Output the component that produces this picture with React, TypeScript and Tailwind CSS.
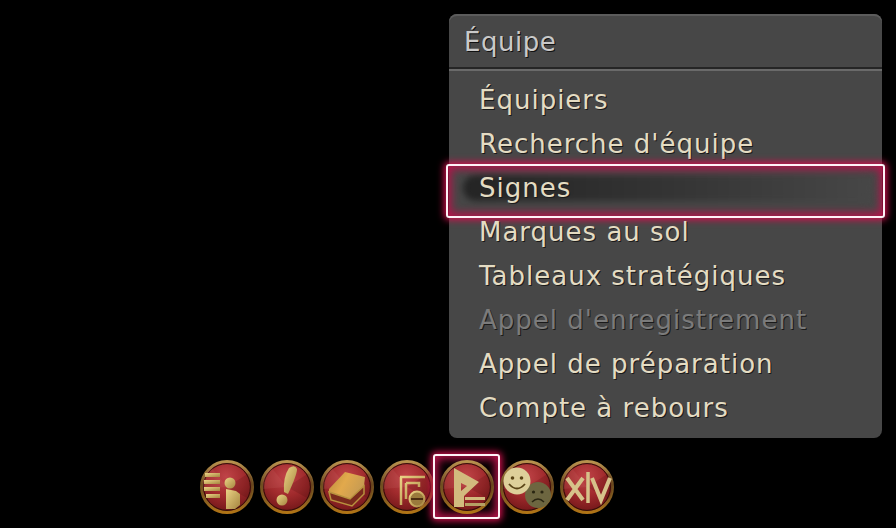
import React from "react";

const Defs = () => (
  <svg width="0" height="0" className="absolute">
    <defs>
      <radialGradient id="red" cx="48%" cy="30%" r="75%">
        <stop offset="0%" stopColor="#c04448" />
        <stop offset="50%" stopColor="#a02a2c" />
        <stop offset="85%" stopColor="#7a1a1c" />
        <stop offset="100%" stopColor="#3f0d0c" />
      </radialGradient>
      <linearGradient id="rim" x1="0" y1="0" x2="0" y2="1">
        <stop offset="0%" stopColor="#b8924e" />
        <stop offset="45%" stopColor="#6e4e20" />
        <stop offset="80%" stopColor="#8c6220" />
        <stop offset="100%" stopColor="#b07416" />
      </linearGradient>
      <linearGradient id="gold" x1="0" y1="0" x2="1" y2="1">
        <stop offset="0%" stopColor="#ecd486" />
        <stop offset="100%" stopColor="#a5853f" />
      </linearGradient>
      <linearGradient id="book" x1="0" y1="0" x2="1" y2="0.4">
        <stop offset="0%" stopColor="#b98a3c" />
        <stop offset="50%" stopColor="#e2a94c" />
        <stop offset="100%" stopColor="#c79b52" />
      </linearGradient>
    </defs>
  </svg>
);

const Coin = ({ children }: { children: React.ReactNode }) => (
  <svg width="56" height="56" viewBox="0 0 56 56" className="relative block shrink-0">
    <circle cx="28" cy="28" r="25.5" fill="url(#red)" stroke="url(#rim)" strokeWidth="3" />
    <circle cx="28" cy="28" r="23.4" fill="none" stroke="#2e0e06" strokeWidth="1" />
    <path d="M28 28 L12 8 A25 25 0 0 0 4 30 Z" fill="#d87c78" opacity="0.14" />
    <path d="M28 28 L50 14 A25 25 0 0 1 50 40 Z" fill="#400c0c" opacity="0.18" />
    {children}
  </svg>
);

const icons = [
  <g key="a" fill="url(#gold)">
    <rect x="6" y="14" width="15" height="4" />
    <rect x="5" y="21" width="16" height="4" />
    <rect x="5" y="28" width="16" height="4" />
    <rect x="7" y="35" width="14" height="4" />
    <circle cx="31" cy="24" r="5.5" />
    <path d="M27 30 V50 H36 L41 46 V35 L37 32 Z" />
  </g>,
  <g key="b" fill="url(#gold)">
    <path d="M30 9 Q36 5 38 10 Q38 16 29 35 L25 33 Q24 18 30 9 Z" />
    <circle cx="23" cy="41" r="5.5" />
  </g>,
  <g key="c">
    <path d="M10 30 L26 13 L46 18 L45 27 L31 40 L10 33 Z" fill="url(#book)" />
    <path d="M10 33 L12 41 L33 47 L45 35 V27 L31 40 Z" fill="#7a2a1c" stroke="#b8923e" strokeWidth="1.5" />
  </g>,
  <g key="d" fill="none" stroke="url(#gold)">
    <path d="M13 12 V40" strokeWidth="5.5" strokeLinecap="round" />
    <path d="M21 18 H46 M22 18 V46 M27 24 H40 V28 M27 24 V40" strokeWidth="2.5" />
    <circle cx="38" cy="40" r="7.5" fill="#9a7a3c" strokeWidth="2" />
    <path d="M32 40 H44" stroke="#4a2c10" strokeWidth="2" />
  </g>,
  <g key="e" fill="#d2bb7e">
    <path fillRule="evenodd" d="M15 9 L40 23 L25 37 V48 H15 Z M22 24 V32 L28 27 Z" />
    <rect x="26" y="38" width="20" height="3" />
    <rect x="26" y="44" width="20" height="3" fill="#b5a064" />
  </g>,
  <g key="f">
    <circle cx="39" cy="36" r="13" fill="#6d6640" />
    <circle cx="34.5" cy="33" r="1.6" fill="#2a2612" />
    <circle cx="43" cy="33" r="1.6" fill="#2a2612" />
    <path d="M33 43 Q39 37 45 43" fill="none" stroke="#2a2612" strokeWidth="1.5" />
    <circle cx="18" cy="22" r="13.5" fill="#ded09a" />
    <circle cx="13.5" cy="19" r="1.8" fill="#5a4416" />
    <circle cx="22.5" cy="19" r="1.8" fill="#5a4416" />
    <path d="M10 25 Q18 34 26 25" fill="none" stroke="#5a4416" strokeWidth="1.8" />
  </g>,
  <g key="g" fill="none" stroke="#d6c28a">
    <path d="M8 19 L24 41 M24 19 L8 41" strokeWidth="4" />
    <path d="M29 13 V44" strokeWidth="3.5" />
    <path d="M33 19 L42 41 L51 19" strokeWidth="4" />
  </g>,
];

const items = [
  "Équipiers",
  "Recherche d'équipe",
  "Signes",
  "Marques au sol",
  "Tableaux stratégiques",
  "Appel d'enregistrement",
  "Appel de préparation",
  "Compte à rebours",
];

export default function App() {
  return (
    <div
      className="flex h-[528px] w-[896px] flex-col overflow-hidden bg-black pt-[14px]"
      style={{ fontFamily: '"DejaVu Sans", "Open Sans", sans-serif' }}
    >
      <Defs />
      <div className="ml-[449px] flex h-[424px] w-[433px] flex-col rounded-[8px] bg-[#474747] shadow-[inset_0_2px_0_#5c5c5c]">
        <div className="flex h-[53px] items-center pl-[15px] pt-[2px] text-[26px] leading-none tracking-[0.5px] text-[#c9c9c9] [text-shadow:1px_1px_0_#111]">
          Équipe
        </div>
        <div className="h-[2px] bg-[#252525]" />
        <div className="h-[2px] bg-[#6a6a6a]" />
        <div className="flex flex-col pt-[7px]">
          {items.map((t) => {
            const sel = t === "Signes";
            const dis = t === "Appel d'enregistrement";
            return (
              <div
                key={t}
                className={`relative flex h-[44px] items-center pl-[30px] text-[26px] leading-none tracking-[1px] [text-shadow:1px_1px_0_#1a1a1a] ${
                  dis ? "text-[#7b7b7b]" : "text-[#e4dcc3]"
                }`}
              >
                {sel && (
                  <>
                    <div className="absolute left-[14px] right-[8px] top-[9px] h-[26px] rounded-full bg-gradient-to-r from-[#242424] via-[#343434] to-[#474747] blur-[3px]" />
                    <div className="absolute -left-[3px] -right-[3px] top-[-2px] h-[54px] rounded-[3px] border-2 border-[#fff2f6] shadow-[0_0_7px_2px_#d0104c,inset_0_0_8px_3px_#b8134a]" />
                  </>
                )}
                <span className="relative">{t}</span>
              </div>
            );
          })}
        </div>
      </div>
      <div className="ml-[199px] mt-[21px] flex gap-[4px]">
        {icons.map((ic, i) => (
          <div key={i} className="relative h-[56px] w-[56px]">
            {i === 4 && (
              <div className="absolute -left-[6px] -top-[5px] h-[65px] w-[67px] rounded-[3px] border-2 border-[#fff2f6] bg-black shadow-[0_0_7px_2px_#d0104c,inset_0_0_8px_3px_#b8134a]" />
            )}
            <Coin>{ic}</Coin>
          </div>
        ))}
      </div>
    </div>
  );
}
